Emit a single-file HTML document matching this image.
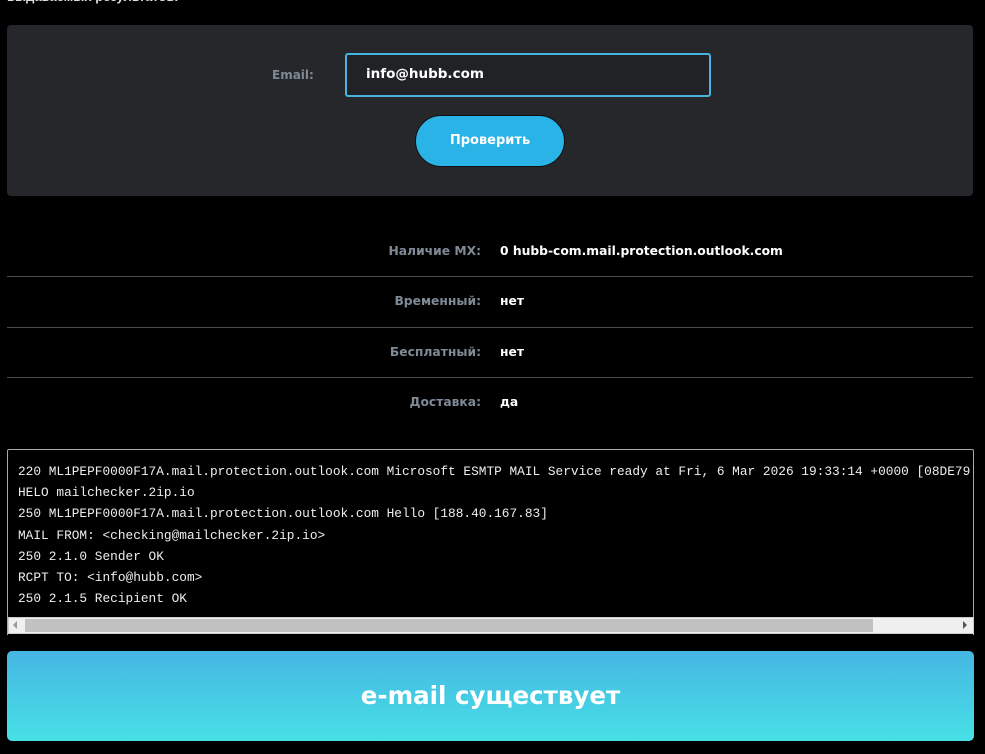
<!DOCTYPE html>
<html><head><meta charset="utf-8"><style>
*{margin:0;padding:0;box-sizing:border-box}
body{width:985px;height:754px;background:#000;overflow:hidden;position:relative;font-family:"Liberation Sans",sans-serif}
.a{position:absolute}
.top{left:7px;top:-11px;color:#ddd;font-size:13px;font-weight:bold}
.panel{left:7px;top:25px;width:966px;height:171px;background:#25272b;border-radius:4px}
.lab{color:#7e8a96;font-size:13px;font-weight:bold;font-family:"DejaVu Sans",sans-serif;font-size:12px}
.inp{left:345px;top:53px;width:366px;height:44px;border:2px solid #47b4e0;border-radius:3px;background:#202226;color:#fff;font-size:13.5px;font-weight:bold;padding:11px 0 0 19px;font-family:"DejaVu Sans",sans-serif}
.btn{left:415px;top:115px;width:150px;height:52px;border-radius:26px;background:#29b3e6;border:1px solid #111;color:#fff;font-size:13px;font-weight:bold;text-align:center;line-height:50px;font-family:"DejaVu Sans",sans-serif}
.rl{right:504px;width:300px;text-align:right;color:#7e8a96;font-size:12.3px;font-weight:bold;font-family:"DejaVu Sans",sans-serif}
.rv{left:500px;color:#fff;font-size:12.3px;font-weight:bold;font-family:"DejaVu Sans",sans-serif}
.hr{left:7px;width:966px;height:1px;background:#4a4a4a}
.con{left:7px;top:449px;width:967px;height:186px;border:1px solid #aaa;border-bottom:none;background:#000;border-radius:2px 2px 0 0}
.mono{left:18px;top:461px;color:#eee;font-family:"Liberation Mono",monospace;font-size:12.8px;line-height:21.2px;white-space:pre}
.sb{left:8px;top:617px;width:966px;height:17px;background:#f0f0f0;border:1px solid #ccc}
.th{left:25px;top:619px;width:848px;height:13px;background:#c1c1c1}
.ban{left:7px;top:651px;width:967px;height:90px;border-radius:5px;background:linear-gradient(#46b6e3,#47e0e6);color:#fff;font-size:24.5px;font-weight:bold;text-align:center;line-height:90px;font-family:"DejaVu Sans",sans-serif}
</style></head><body>
<div class="a top">выдаваемых результатов.</div>
<div class="a panel"></div>
<div class="a lab" style="left:272px;top:68px">Email:</div>
<div class="a inp">info@hubb.com</div>
<div class="a btn">Проверить</div>
<div class="a rl" style="top:244px">Наличие MX:</div><div class="a rv" style="top:244px">0 hubb-com.mail.protection.outlook.com</div>
<div class="a hr" style="top:276px"></div>
<div class="a rl" style="top:294px">Временный:</div><div class="a rv" style="top:294px">нет</div>
<div class="a hr" style="top:327px"></div>
<div class="a rl" style="top:345px">Бесплатный:</div><div class="a rv" style="top:345px">нет</div>
<div class="a hr" style="top:377px"></div>
<div class="a rl" style="top:395px">Доставка:</div><div class="a rv" style="top:395px">да</div>
<div class="a con"></div>
<div class="a mono" style="width:955px;overflow:hidden">220 ML1PEPF0000F17A.mail.protection.outlook.com Microsoft ESMTP MAIL Service ready at Fri, 6 Mar 2026 19:33:14 +0000 [08DE79
HELO mailchecker.2ip.io
250 ML1PEPF0000F17A.mail.protection.outlook.com Hello [188.40.167.83]
MAIL FROM: &lt;checking@mailchecker.2ip.io&gt;
250 2.1.0 Sender OK
RCPT TO: &lt;info@hubb.com&gt;
250 2.1.5 Recipient OK</div>
<div class="a sb"></div>
<div class="a th"></div>
<div class="a" style="left:13px;top:621px;width:0;height:0;border-top:4px solid transparent;border-bottom:4px solid transparent;border-right:4px solid #999"></div>
<div class="a" style="left:963px;top:621px;width:0;height:0;border-top:4px solid transparent;border-bottom:4px solid transparent;border-left:4px solid #555"></div>
<div class="a ban">e-mail существует</div>
</body></html>
